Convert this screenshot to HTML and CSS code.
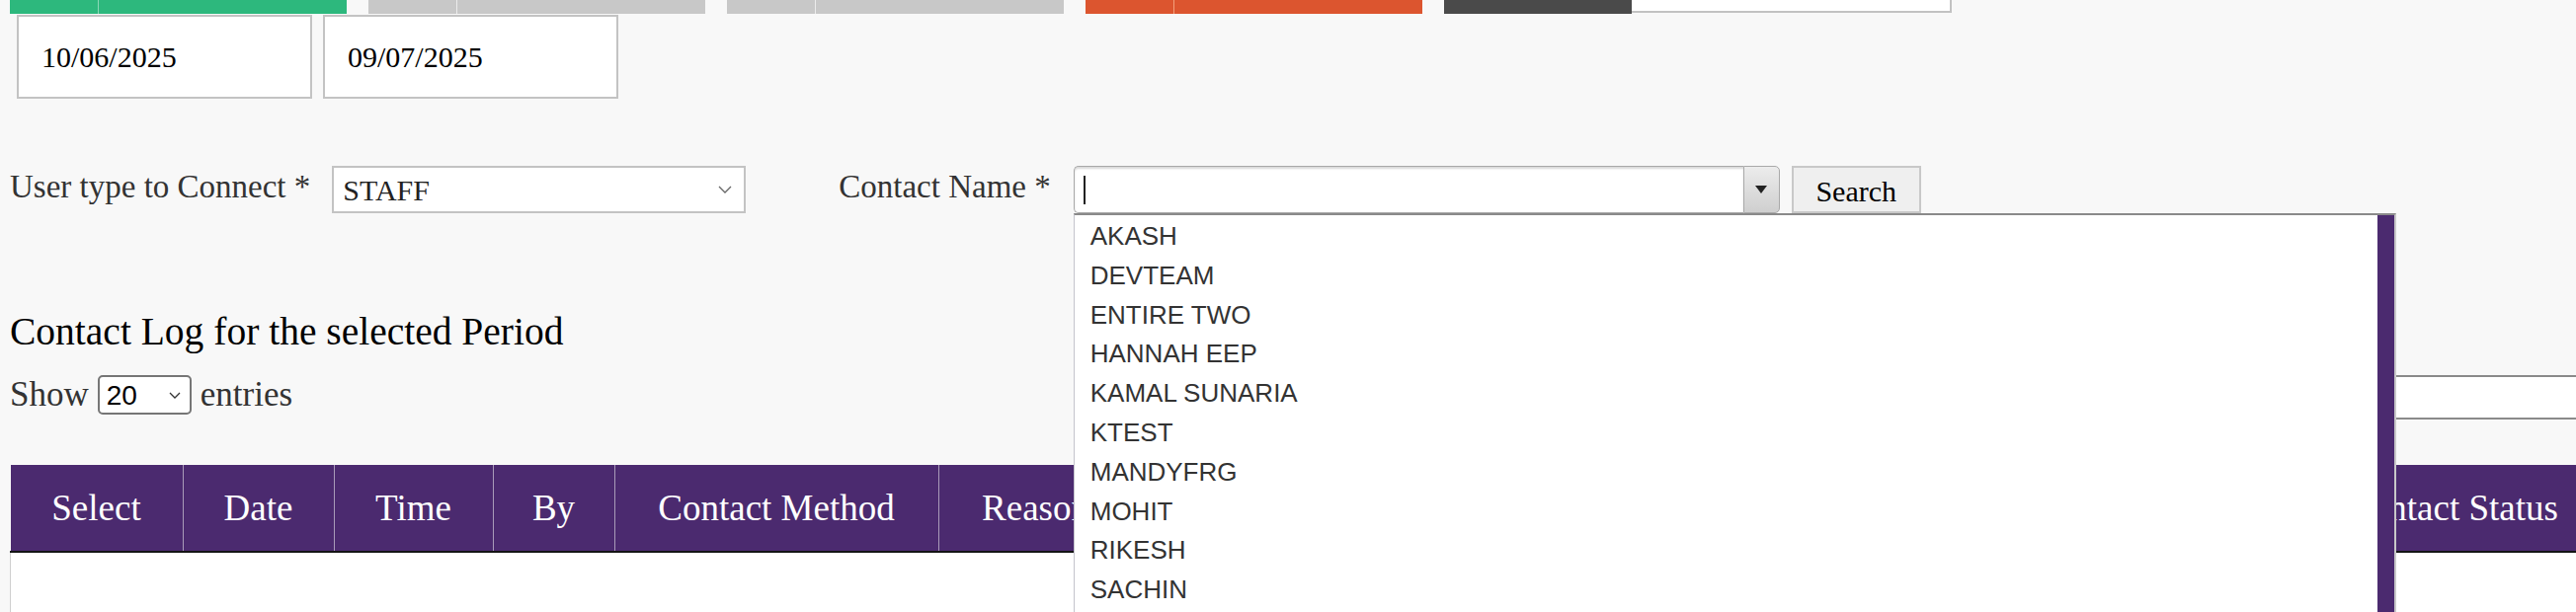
FILE: index.html
```html
<!DOCTYPE html>
<html lang="en">
<head>
    <meta charset="UTF-8">
    <meta name="viewport" content="width=device-width, initial-scale=1.0">
    <title>Contact Log</title>
    <link rel="stylesheet" href="styles.css">
</head>
<body>
<div class="page">
    <!-- action buttons (scrolled past, only their bottoms show) -->
    <div class="toolbar">
        <span class="tab tab-green"><span class="tab-icon"></span><span class="tab-label"></span></span>
        <span class="tab tab-grey"><span class="tab-icon"></span><span class="tab-label"></span></span>
        <span class="tab tab-grey"><span class="tab-icon"></span><span class="tab-label"></span></span>
        <span class="tab tab-orange"><span class="tab-icon"></span><span class="tab-label"></span></span>
        <span class="tab-group">
            <span class="tab-dark"></span>
            <span class="toolbar-input"></span>
        </span>
    </div>

    <div class="date-range">
        <input type="text" class="date-input" value="10/06/2025">
        <input type="text" class="date-input" value="09/07/2025">
    </div>

    <form class="filter-row" onsubmit="return false">
        <label class="field-label" for="userType">User type to Connect *</label>
        <span class="select-wrap">
            <select id="userType" class="user-type">
                <option>STAFF</option>
            </select>
            <svg class="chevron" width="14" height="8" viewBox="0 0 14 8"><path d="M1 1l6 6 6-6" fill="none" stroke="#666" stroke-width="1.3"/></svg>
        </span>

        <label class="field-label contact-label">Contact Name *</label>
        <div class="combo">
            <div class="combo-input"><span class="caret"></span></div>
            <span class="combo-toggle"><span class="triangle"></span></span>

            <div class="combo-list">
                <ul class="combo-items">
                    <li>AKASH</li>
                    <li>DEVTEAM</li>
                    <li>ENTIRE TWO</li>
                    <li>HANNAH EEP</li>
                    <li>KAMAL SUNARIA</li>
                    <li>KTEST</li>
                    <li>MANDYFRG</li>
                    <li>MOHIT</li>
                    <li>RIKESH</li>
                    <li>SACHIN</li>
                </ul>
                <span class="combo-scroll"></span>
            </div>
        </div>
        <button type="submit" class="search-btn">Search</button>
    </form>

    <h2 class="log-title">Contact Log for the selected Period</h2>

    <div class="table-controls">
        <label class="length-label">Show
            <span class="select-wrap">
                <select class="length-select">
                    <option>20</option>
                </select>
                <svg class="chevron small" width="12" height="7" viewBox="0 0 12 7"><path d="M1 1l5 5 5-5" fill="none" stroke="#333" stroke-width="1.3"/></svg>
            </span>
            entries</label>
        <input type="text" class="table-search">
    </div>

    <table class="log-table">
        <thead>
            <tr>
                <th class="col-select">Select</th>
                <th class="col-date">Date</th>
                <th class="col-time">Time</th>
                <th class="col-by">By</th>
                <th class="col-method">Contact Method</th>
                <th class="col-reason">Reason</th>
                <th class="col-notes">Notes</th>
                <th class="col-follow">Follow Up</th>
                <th class="col-status">Contact Status</th>
            </tr>
        </thead>
        <tbody>
            <tr>
                <td colspan="9"></td>
            </tr>
        </tbody>
    </table>
</div>
</body>
</html>
```

FILE: styles.css
```css
html, body {
    overflow: hidden;
}

body {
    margin: 0;
    background-color: #f8f8f8;
    font-family: "Liberation Serif", "Times New Roman", serif;
    color: #333;
}

.page {
    width: 2640px;
    padding: 0 10px;
}

/* top buttons */
.toolbar {
    display: flex;
    gap: 22px;
    height: 14px;
}

.tab {
    display: flex;
    width: 341px;
    height: 14px;
}

.tab-icon {
    width: 89px;
    border-right: 1px solid rgba(255, 255, 255, 0.45);
}

.tab-label {
    flex: 1;
}

.tab-green { background-color: #2db87d; }
.tab-grey { background-color: #c8c8c8; }
.tab-grey .tab-icon { border-right-color: #ececec; }
.tab-orange { background-color: #dc552f; }
.tab-orange .tab-icon { border-right-color: #f3a07c; }

.tab-group {
    display: flex;
}

.tab-dark {
    width: 190px;
    height: 14px;
    background-color: #4a4a4a;
}

.toolbar-input {
    width: 324px;
    height: 13px;
    box-sizing: border-box;
    background-color: white;
    border-right: 2px solid #c2c2c2;
    border-bottom: 2px solid #c2c2c2;
}

/* date range */
.date-range {
    display: flex;
    gap: 11px;
    margin-top: 1px;
    padding-left: 7px;
}

.date-input {
    width: 299px;
    height: 85px;
    box-sizing: border-box;
    border: 2px solid #c3c3c3;
    background-color: white;
    padding: 0 0 0 23px;
    margin: 0;
    font-family: "Liberation Serif", "Times New Roman", serif;
    font-size: 30px;
    color: black;
}

/* filter row */
.filter-row {
    display: flex;
    align-items: center;
    height: 48px;
    margin: 68px 0 0 0;
}

.field-label {
    font-size: 33px;
    color: #333;
    margin-right: 22px;
    position: relative;
    top: -3px;
}

.contact-label {
    margin-left: 94px;
    margin-right: 23px;
}

.select-wrap {
    position: relative;
    display: inline-block;
}

.chevron {
    position: absolute;
    right: 14px;
    top: 20px;
    pointer-events: none;
}

.chevron.small {
    right: 11px;
    top: 17px;
}

.user-type {
    appearance: none;
    width: 419px;
    height: 48px;
    box-sizing: border-box;
    border: 2px solid #c3c3c3;
    border-radius: 0;
    background-color: white;
    padding: 0 0 0 9px;
    margin: 0;
    font-family: "Liberation Serif", "Times New Roman", serif;
    font-size: 30px;
    color: #222;
    display: block;
}

.combo {
    position: relative;
    display: flex;
    width: 715px;
    height: 48px;
}

.combo-input {
    flex: 1;
    box-sizing: border-box;
    border: 1px solid #a9a9a9;
    border-right: none;
    border-radius: 5px 0 0 5px;
    background-color: white;
    box-shadow: inset 0 2px 2px rgba(0, 0, 0, 0.15);
    display: flex;
    align-items: center;
    padding-left: 9px;
}

.caret {
    width: 2px;
    height: 29px;
    background-color: #222;
}

.combo-toggle {
    width: 37px;
    box-sizing: border-box;
    border: 1px solid #a9a9a9;
    border-radius: 0 5px 5px 0;
    background: linear-gradient(#ececec, #cfcfcf);
    display: flex;
    align-items: center;
    justify-content: center;
}

.triangle {
    width: 0;
    height: 0;
    border-left: 6px solid transparent;
    border-right: 6px solid transparent;
    border-top: 8px solid #222;
}

.combo-list {
    position: absolute;
    top: 48px;
    left: 0;
    width: 1339px;
    height: 440px;
    box-sizing: border-box;
    display: flex;
    background-color: white;
    border-top: 2px solid #8a8a8a;
    border-left: 1px solid #c4c4cc;
    border-right: 2px solid #c8c8c8;
    z-index: 10;
    overflow: hidden;
}

.combo-items {
    flex: 1;
    list-style: none;
    margin: 0;
    padding: 2px 0 0 16px;
    font-family: "Liberation Sans", Arial, sans-serif;
    font-size: 26px;
    line-height: 39.8px;
    color: #333;
}

.combo-scroll {
    width: 17px;
    background-color: #4b2a6f;
}

.search-btn {
    margin-left: 12px;
    width: 131px;
    height: 48px;
    box-sizing: border-box;
    border: 2px solid #c8c8c8;
    background-color: #efefef;
    font-family: "Liberation Serif", "Times New Roman", serif;
    font-size: 30px;
    color: black;
    padding: 4px 0 0 0;
}

/* log heading */
.log-title {
    font-size: 39.5px;
    font-weight: normal;
    line-height: 46px;
    color: black;
    margin: 97px 0 0 0;
}

.table-controls {
    display: flex;
    justify-content: space-between;
    align-items: flex-start;
    margin-top: 21px;
    height: 45px;
}

.length-label {
    display: flex;
    align-items: center;
    gap: 9px;
    font-size: 35px;
    color: #333;
    height: 40px;
}

.length-select {
    appearance: none;
    width: 95px;
    height: 40px;
    box-sizing: border-box;
    border: 2px solid #767676;
    border-radius: 5px;
    background-color: white;
    padding: 0 0 0 7px;
    margin: 0;
    font-family: "Liberation Sans", Arial, sans-serif;
    font-size: 28px;
    color: black;
    display: block;
}

.table-search {
    width: 250px;
    height: 45px;
    box-sizing: border-box;
    border: 2px solid #8a8a8a;
    background-color: white;
    margin: 0;
}

/* table */
.log-table {
    width: 2640px;
    table-layout: fixed;
    border-collapse: collapse;
    margin-top: 46px;
}

.log-table th {
    background-color: #4b2a6f;
    color: white;
    font-size: 37px;
    font-weight: normal;
    height: 87px;
    padding: 0;
    text-align: center;
    white-space: nowrap;
    border-left: 1px solid #a99bb9;
    border-bottom: 2px solid #141414;
}

.log-table th:first-child {
    border-left: none;
}

.col-select { width: 174px; }
.col-date { width: 152px; }
.col-time { width: 160px; }
.col-by { width: 122px; }
.col-method { width: 327px; }
.col-reason { width: 196px; }
.col-notes { width: 580px; }
.col-follow { width: 577px; }
.col-status { width: 352px; }

.log-table td {
    height: 90px;
    background-color: white;
    border-top: 2px solid #cfcfcf;
    border-left: 1px solid #cfcfcf;
}
```
